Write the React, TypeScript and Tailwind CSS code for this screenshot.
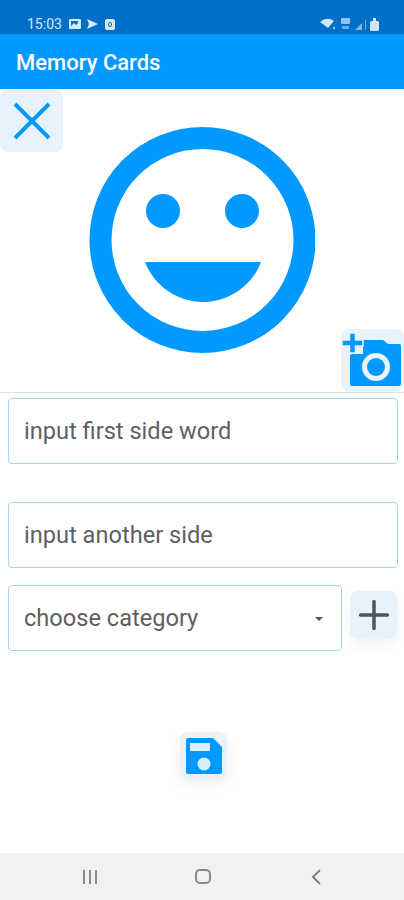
import { Plus } from "lucide-react";

function CloseIcon() {
    return (
        <svg width="38" height="38" viewBox="0 0 38 38" fill="none" stroke="#0099ff" strokeWidth="4">
            <path d="M2 2 L36 36 M36 2 L2 36" />
        </svg>
    );
}

function Smiley() {
    return (
        <svg width="226" height="228" viewBox="0 0 226 228">
            <circle cx="113.5" cy="114" r="102" fill="none" stroke="#0099ff" strokeWidth="22" />
            <circle cx="74" cy="85" r="17" fill="#0099ff" />
            <circle cx="153" cy="85" r="17" fill="#0099ff" />
            <path d="M56 136 H172 C163 160 139 176 114 176 C89 176 65 160 56 136 Z" fill="#0099ff" />
        </svg>
    );
}

function CameraIcon() {
    return (
        <svg width="63" height="62" viewBox="0 0 63 62">
            <path d="M9 27 Q9 25 11 25 H22 V11 H42 L47 15 H58 Q60 15 60 17 V55 Q60 57 58 57 H11 Q9 57 9 55 Z" fill="#0099ff" />
            <path d="M1 11 H8.5 V4 H14.5 V11 H22 V17 H14.5 V24 H8.5 V17 H1 Z" fill="#0099ff" stroke="#e7f2fb" strokeWidth="1.5" />
            <circle cx="35" cy="38" r="11.5" fill="none" stroke="#e7f2fb" strokeWidth="5" />
        </svg>
    );
}

function SaveIcon() {
    return (
        <svg width="36" height="36" viewBox="0 0 36 36">
            <path d="M2 0 H27 L36 9 V34 Q36 36 34 36 H2 Q0 36 0 34 V2 Q0 0 2 0 Z" fill="#0099ff" />
            <rect x="4" y="5" width="20" height="8" fill="#dbeefc" />
            <circle cx="18" cy="26" r="6.5" fill="#dbeefc" />
        </svg>
    );
}

function StatusIcons() {
    return (
        <svg width="60" height="14" viewBox="0 0 60 14" fill="#cfe6f7">
            <path d="M0 5 Q7 -1 14 4 L8 11 Z" />
            <circle cx="14" cy="11" r="1" />
            <rect x="21" y="1" width="9" height="6" rx="1" opacity="0.7" />
            <rect x="22" y="9" width="7" height="3" opacity="0.5" />
            <path d="M35 13 L42 6 V13 Z" opacity="0.6" />
            <rect x="45" y="3" width="1" height="10" opacity="0.5" />
            <rect x="50" y="4" width="9" height="10" rx="1.5" />
            <rect x="53" y="1" width="3" height="3" />
        </svg>
    );
}

function Field({ label }: { label: string }) {
    return (
        <div className="flex h-[66px] items-center rounded border border-[#a3d7f0] bg-white px-[15px] pt-[2px] text-[23.6px] text-[#5f5f5f]">
            {label}
        </div>
    );
}

export default function App() {
    return (
        <div className="relative flex h-[900px] w-[404px] flex-col overflow-hidden bg-white font-['Roboto',sans-serif]">
            <div className="flex h-[34px] items-center justify-between bg-[#006fc8] pl-[27px] pr-[24px] pt-[14px]">
                <div className="flex items-center gap-[7px] text-[14px] text-[#d5e9f8]">
                    <span>15:03</span>
                    <div className="flex items-center gap-[6px]">
                        <svg width="12" height="10" viewBox="0 0 12 10" fill="#d5e9f8">
                            <path d="M1 0 H11 Q12 0 12 1 V9 Q12 10 11 10 H1 Q0 10 0 9 V1 Q0 0 1 0 Z M2 7 L5 4 L7 6 L9 4 V2 H2 Z" />
                        </svg>
                        <svg width="11" height="10" viewBox="0 0 11 10" fill="#d5e9f8">
                            <path d="M0 0 L11 5 L0 10 L2 5 Z" />
                        </svg>
                        <div className="ml-[1px] flex h-[11px] w-[10px] items-center justify-center rounded-[2px] bg-[#d5e9f8]">
                            <div className="h-[5px] w-[4px] rounded-full border border-[#006fc8]" />
                        </div>
                    </div>
                </div>
                <StatusIcons />
            </div>

            <header className="flex h-[55px] items-center bg-[#0099ff] px-4 pt-[1px] text-[22px] font-medium text-white">
                Memory Cards
            </header>

            <section className="relative flex h-[304px] items-center justify-center border-b border-[#dedede] pb-[2px]">
                <button className="absolute left-0 top-[1px] flex h-[62px] w-[63px] items-center justify-center rounded-lg bg-[#e7f2fb]">
                    <CloseIcon />
                </button>
                <Smiley />
                <button className="absolute bottom-[1px] right-0 h-[62px] w-[63px] rounded-lg bg-[#e7f2fb]">
                    <CameraIcon />
                </button>
            </section>

            <div className="flex flex-1 flex-col pl-2 pr-[6px] pt-[5px]">
                <Field label="input first side word" />
                <div className="mt-[38px]">
                    <Field label="input another side" />
                </div>
                <div className="mt-[17px] flex items-start justify-between">
                    <div className="flex h-[66px] w-[334px] items-center justify-between rounded border border-[#a3d7f0] pl-[15px] pr-[18px] pt-[2px] text-[23.6px] text-[#5f5f5f]">
                        <span>choose category</span>
                        <span className="h-0 w-0 border-x-[4px] border-t-[4px] border-x-transparent border-t-[#555555]" />
                    </div>
                    <button className="mr-[1px] mt-[6px] flex h-[48px] w-[47px] items-center justify-center rounded-lg bg-[#e7f2fb] shadow-[0_6px_14px_rgba(0,0,0,0.05)]">
                        <Plus size={46} strokeWidth={1.8} color="#4a5560" />
                    </button>
                </div>
                <div className="mt-[81px] flex justify-center pl-[1px]">
                    <button className="flex h-[47px] w-[47px] items-center justify-center rounded-lg bg-[#e7f2fb] shadow-[0_6px_14px_rgba(0,0,0,0.06)]">
                        <SaveIcon />
                    </button>
                </div>
            </div>

            <nav className="flex h-[47px] items-center bg-[#f1f1f1] pl-[83px]">
                <div className="flex gap-[4px]">
                    <div className="h-[14px] w-[2px] bg-[#8a8a8a]" />
                    <div className="h-[14px] w-[2px] bg-[#8a8a8a]" />
                    <div className="h-[14px] w-[2px] bg-[#8a8a8a]" />
                </div>
                <div className="ml-[98px] h-[15px] w-[16px] rounded-[5px] border-2 border-[#8a8a8a]" />
                <svg className="ml-[100px]" width="10" height="16" viewBox="0 0 10 16" fill="none" stroke="#7a7a7a" strokeWidth="1.8">
                    <path d="M9 1 L2 8 L9 15" />
                </svg>
            </nav>
        </div>
    );
}
